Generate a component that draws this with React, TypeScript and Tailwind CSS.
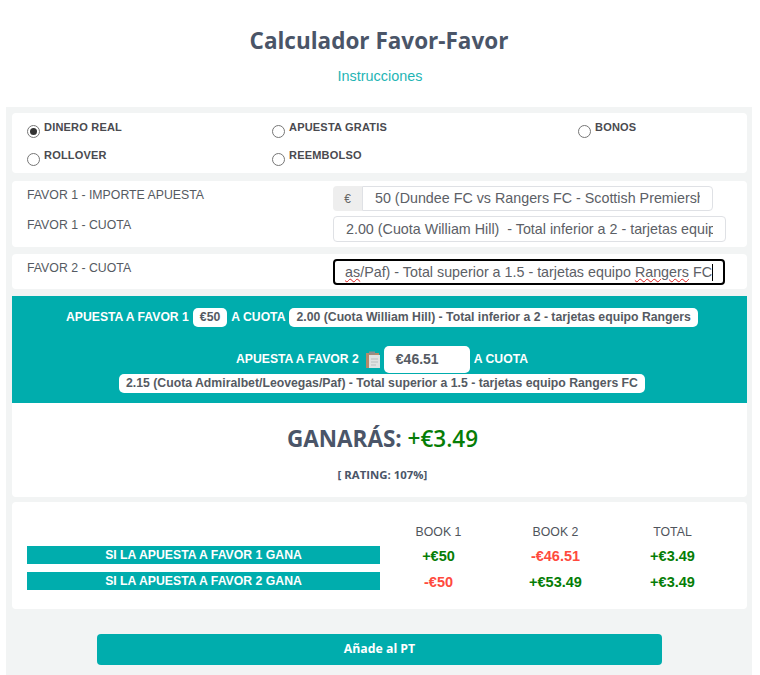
const sans = "font-['Liberation_Sans',Arial,sans-serif]";
const open = "font-['Open_Sans','Noto_Sans',sans-serif]";

function Radio({ label, checked, className }: { label: string; checked?: boolean; className?: string }) {
  return (
    <label className={`flex items-start gap-[4px] ${className ?? ""}`}>
      <span className="mt-[5px] grid size-[13px] shrink-0 place-items-center rounded-full border border-[#767676] bg-white">
        {checked && <span className="size-[7px] rounded-full bg-[#333]" />}
      </span>
      <span className="text-[11px] leading-[14px] font-bold tracking-[0.2px] text-[#4a4a4f]">{label}</span>
    </label>
  );
}

function Pill({ children }: { children: React.ReactNode }) {
  return (
    <span className="inline-block rounded-[5px] bg-white px-[7px] text-[12.25px] leading-[19px] font-bold text-[#555a62]">
      {children}
    </span>
  );
}

const rows = [
  { label: "SI LA APUESTA A FAVOR 1 GANA", a: "+€50", b: "-€46.51", t: "+€3.49", aWin: true, bWin: false },
  { label: "SI LA APUESTA A FAVOR 2 GANA", a: "-€50", b: "+€53.49", t: "+€3.49", aWin: false, bWin: true },
];

const inputCls =
  "rounded-[4px] border border-[#dfe1e5] bg-white px-[12px] pt-[1px] text-[14.3px] text-[#5c6066] outline-none";

const valueCls = "h-[18px] pt-[1px] text-[14.5px] leading-[18px] font-bold";

export default function App() {
  return (
    <div className={`${sans} h-[675px] w-[760px] overflow-hidden bg-white`}>
      <header className="flex h-[107px] flex-col items-center">
        <h1 className={`${open} mt-[25px] mr-[2px] text-[22.5px] leading-[32px] font-bold text-[#4a5568]`}>Calculador Favor-Favor</h1>
        <a className="mt-[9px] text-[14.4px] leading-[20px] text-[#1fb5b5]">Instrucciones</a>
      </header>

      <main className="mr-[8px] ml-[6px] flex h-[568px] flex-col bg-[#f2f4f4] px-[6px] pt-[6px] pr-[5px]">
        <section className="grid h-[60px] grid-cols-[245px_306px_1fr] content-start rounded-[4px] bg-white pt-[7px] pl-[15px]">
          <Radio label="DINERO REAL" checked className="h-[28px]" />
          <Radio label="APUESTA GRATIS" className="h-[28px]" />
          <Radio label="BONOS" className="h-[28px]" />
          <Radio label="ROLLOVER" className="h-[28px]" />
          <Radio label="REEMBOLSO" className="h-[28px]" />
        </section>

        <section className="mt-[8px] flex h-[66px] flex-col gap-[5px] rounded-[4px] bg-white pt-[5px] pr-[21px] pl-[15px] text-[12.3px] text-[#555a62]">
          <div className="flex h-[25px] justify-between">
            <span className="pt-[2px] leading-[15px]">FAVOR 1 - IMPORTE APUESTA</span>
            <div className="mr-[13px] flex w-[380px]">
              <span className="grid w-[29px] place-items-center rounded-l-[4px] bg-[#eeeeee] text-[12px] text-[#666]">€</span>
              <input
                readOnly
                value="50 (Dundee FC vs Rangers FC - Scottish Premiership)"
                className={`${inputCls} min-w-0 flex-1 rounded-l-none`}
              />
            </div>
          </div>
          <div className="flex h-[26px] justify-between">
            <span className="pt-[2px] leading-[15px]">FAVOR 1 - CUOTA</span>
            <input
              readOnly
              value="2.00 (Cuota William Hill)  - Total inferior a 2 - tarjetas equipo Rangers"
              className={`${inputCls} w-[393px]`}
            />
          </div>
        </section>

        <section className="mt-[7px] flex h-[35px] justify-between rounded-[4px] bg-white pt-[5px] pr-[22px] pl-[15px] text-[12.3px] text-[#555a62]">
          <span className="pt-[2px] leading-[15px]">FAVOR 2 - CUOTA</span>
          <div className="flex h-[26px] w-[392px] items-center justify-end overflow-hidden rounded-[4px] border-2 border-black bg-white pt-[1px] pr-[10px] pl-[11px] text-[14.3px] leading-[17px] whitespace-nowrap text-[#5c6066]">
            <span className="underline decoration-[#e02020] decoration-wavy decoration-1">as</span>
            <span className="whitespace-pre">/Paf) - Total superior a 1.5 - tarjetas equipo </span>
            <span className="underline decoration-[#e02020] decoration-wavy decoration-1">Rangers</span>
            <span className="ml-[4px] border-r border-black">FC</span>
          </div>
        </section>

        <section className="mt-[7px] flex h-[107px] flex-col items-center bg-[#00adad] pt-[11px] pl-[5px] text-[12.2px] font-bold text-white">
          <div className="flex h-[20px] items-center gap-[4px] leading-[19px]">
            <span>APUESTA A FAVOR 1</span>
            <Pill>€50</Pill>
            <span>A CUOTA</span>
            <Pill>2.00 (Cuota William Hill) - Total inferior a 2 - tarjetas equipo Rangers</Pill>
          </div>
          <div className="mt-[19px] flex h-[27px] items-center gap-[3px]">
            <span>APUESTA A FAVOR 2</span>
            <svg width="16" height="18" viewBox="0 0 16 18" className="ml-[3px]">
              <rect x="1" y="2" width="13" height="15" fill="#b58a68" />
              <rect x="4" y="4" width="11" height="13" fill="#dfe3e3" />
              <rect x="4" y="0.5" width="6" height="3" fill="#8d8d8d" />
              <path d="M6 8h7M6 11h7M6 14h5" stroke="#b9bfbf" strokeWidth="1" />
            </svg>
            <span className="h-[27px] w-[86px] rounded-[5px] bg-white pl-[12px] text-[14px] leading-[27px] text-[#555a62]">€46.51</span>
            <span className="ml-[1px]">A CUOTA</span>
          </div>
          <div className="mt-[1px] leading-[19px]">
            <Pill>2.15 (Cuota Admiralbet/Leovegas/Paf) - Total superior a 1.5 - tarjetas equipo Rangers FC</Pill>
          </div>
        </section>

        <section className={`${open} flex h-[94px] flex-col items-center rounded-b-[4px] bg-white pt-[20px] pl-[6px]`}>
          <p className="text-[22.5px] leading-[32px] font-bold text-[#4a5568]">
            GANARÁS: <span className="font-semibold text-[#067d06]">+€3.49</span>
          </p>
          <p className="mt-[13px] text-[11.4px] leading-[14px] font-bold text-[#4a5568]">[ RATING: 107%]</p>
        </section>

        <section className="mt-[5px] h-[107px] rounded-[4px] bg-white pt-[23px] pr-[0px] pl-[15px]">
          <div className="grid grid-cols-[353px_117px_117px_117px] text-center">
            <span />
            <span className="text-[12.3px] leading-[15px] text-[#4f545c]">BOOK 1</span>
            <span className="text-[12.3px] leading-[15px] text-[#4f545c]">BOOK 2</span>
            <span className="text-[12.3px] leading-[15px] text-[#4f545c]">TOTAL</span>
          </div>
          {rows.map((row, i) => (
            <div key={row.label} className={`grid grid-cols-[353px_117px_117px_117px] items-center text-center ${i === 0 ? "mt-[6px]" : "mt-[8px]"}`}>
              <span className="h-[18px] bg-[#00adad] text-[12.25px] leading-[18px] font-bold text-white">{row.label}</span>
              <span className={`${valueCls} ${row.aWin ? "text-[#067d06]" : "text-[#ff4a3d]"}`}>{row.a}</span>
              <span className={`${valueCls} ${row.bWin ? "text-[#067d06]" : "text-[#ff4a3d]"}`}>{row.b}</span>
              <span className={`${valueCls} text-[#067d06]`}>{row.t}</span>
            </div>
          ))}
        </section>

        <div className="mt-[25px] flex pl-[85px]">
          <button className={`${open} h-[31px] w-[565px] rounded-[4px] bg-[#00adad] text-[12.3px] font-bold text-white`}>Añade al PT</button>
        </div>
      </main>
    </div>
  );
}
